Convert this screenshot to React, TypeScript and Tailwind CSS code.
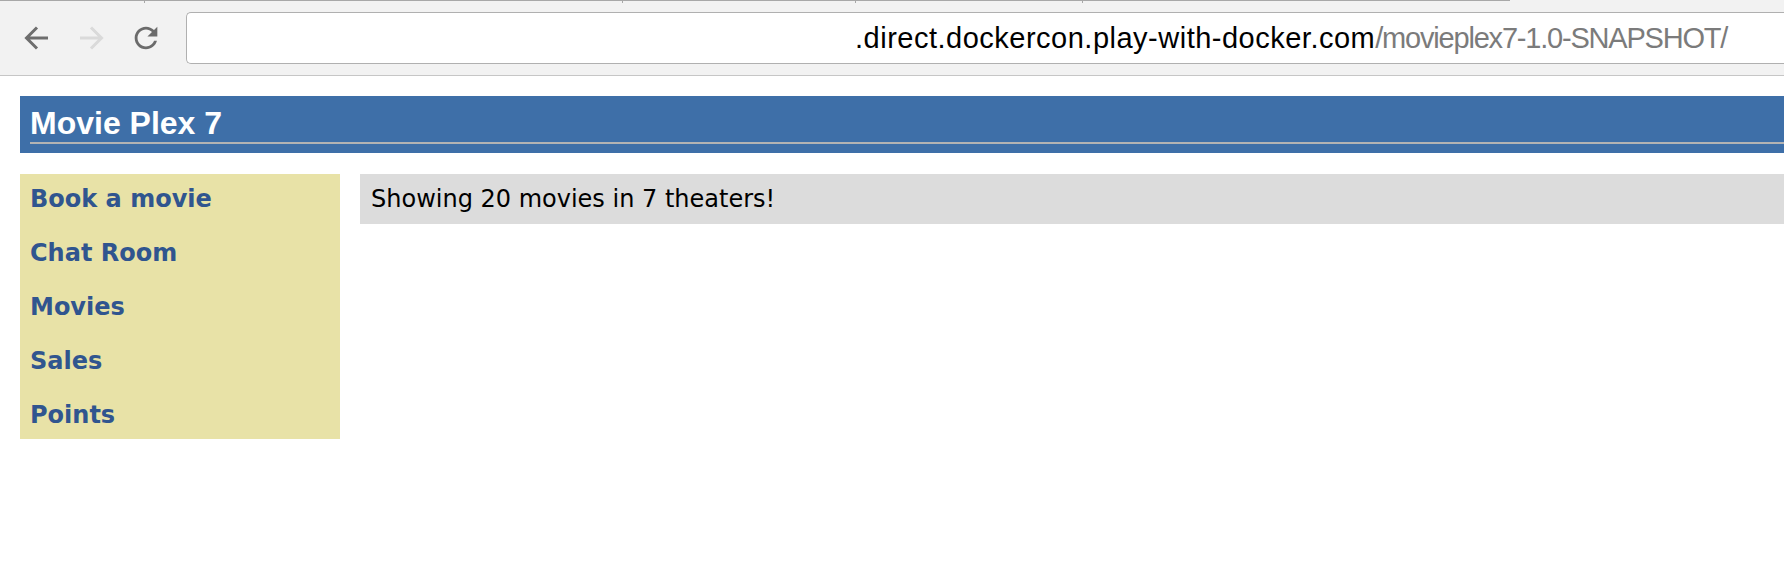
import React from 'react';

const links = ['Book a movie', 'Chat Room', 'Movies', 'Sales', 'Points'];

const BackIcon = ({ color }: { color: string }) => (
  <svg width="26" height="26" viewBox="0 0 26 26" fill="none">
    <path d="M25 13H4M14 2.5L3.5 13L14 23.5" stroke={color} strokeWidth="3" />
  </svg>
);

const ForwardIcon = ({ color }: { color: string }) => (
  <svg width="26" height="26" viewBox="0 0 26 26" fill="none">
    <path d="M1 13H22M12 2.5L22.5 13L12 23.5" stroke={color} strokeWidth="3" />
  </svg>
);

const ReloadIcon = () => (
  <svg width="34" height="34" viewBox="0 0 24 24" fill="#6b6b6b">
    <path d="M17.65 6.35C16.2 4.9 14.21 4 12 4c-4.42 0-7.99 3.58-7.99 8s3.57 8 7.99 8c3.73 0 6.84-2.55 7.73-6h-2.08c-.82 2.33-3.04 4-5.65 4-3.31 0-6-2.69-6-6s2.69-6 6-6c1.66 0 3.14.69 4.22 1.78L13 11h7V4l-2.35 2.35z" />
  </svg>
);

const BrowserBar: React.FC = () => (
  <div className="relative h-[76px] bg-[#f2f2f2] border-b border-[#c6c6c6]">
    {/* tab strip edge */}
    <div className="absolute top-0 left-0 flex h-[3px]">
      <div className="w-[145px] border-t border-r border-[#a8a8a8]" />
      <div className="w-[478px] border-t border-r border-[#a8a8a8]" />
      <div className="w-[233px] border-t border-r border-[#a8a8a8]" />
      <div className="w-[227px] border-t border-r border-[#a8a8a8]" />
      <div className="w-[427px] border-t border-[#a8a8a8]" />
    </div>
    <div className="flex items-center h-[75px] pl-[23px]">
      <BackIcon color="#6e6e6e" />
      <div className="ml-[30px]">
        <ForwardIcon color="#dadada" />
      </div>
      <div className="ml-[24px]">
        <ReloadIcon />
      </div>
      <div className="ml-[23px] flex-1 h-[52px] bg-white border-y border-l border-[#b0b0b0] rounded-l-[5px] pl-[668px] font-['Liberation_Sans',Arial,sans-serif] text-[29px] leading-[50px] whitespace-nowrap overflow-hidden">
        <span className="text-black tracking-[0.5px]">.direct.dockercon.play-with-docker.com</span>
        <span className="text-[#7b7b7b] tracking-[-1.2px]">/movieplex7-1.0-SNAPSHOT/</span>
      </div>
    </div>
  </div>
);

export default function App() {
  return (
    <div className="min-h-screen bg-white">
      <BrowserBar />
      <div className="pt-5 pl-5">
        <div className="bg-[#3e6fa8] pt-[9px] pb-[9px] pl-[10px]">
          <h1 className="font-['Liberation_Sans',Arial,sans-serif] font-bold text-white text-[32px] leading-[36px] pb-[1px] border-b-2 border-[#b3b3b3]">
            Movie Plex 7
          </h1>
        </div>
        <div className="mt-[21px] flex items-start gap-5">
          <div className="w-[320px] shrink-0 bg-[#e8e2a7] pt-[11px] pb-[10px] pl-[10px] flex flex-col gap-[26px]">
            {links.map((l) => (
              <a
                key={l}
                className="block font-['DejaVu_Sans',Verdana,sans-serif] font-bold text-[24px] leading-[28px] text-[#30558f]"
              >
                {l}
              </a>
            ))}
          </div>
          <div className="flex-1 bg-[#dcdcdc] py-[11px] pl-[11px] font-['DejaVu_Sans',Verdana,sans-serif] text-[24px] leading-[28px] text-black">
            Showing 20 movies in 7 theaters!
          </div>
        </div>
      </div>
    </div>
  );
}
